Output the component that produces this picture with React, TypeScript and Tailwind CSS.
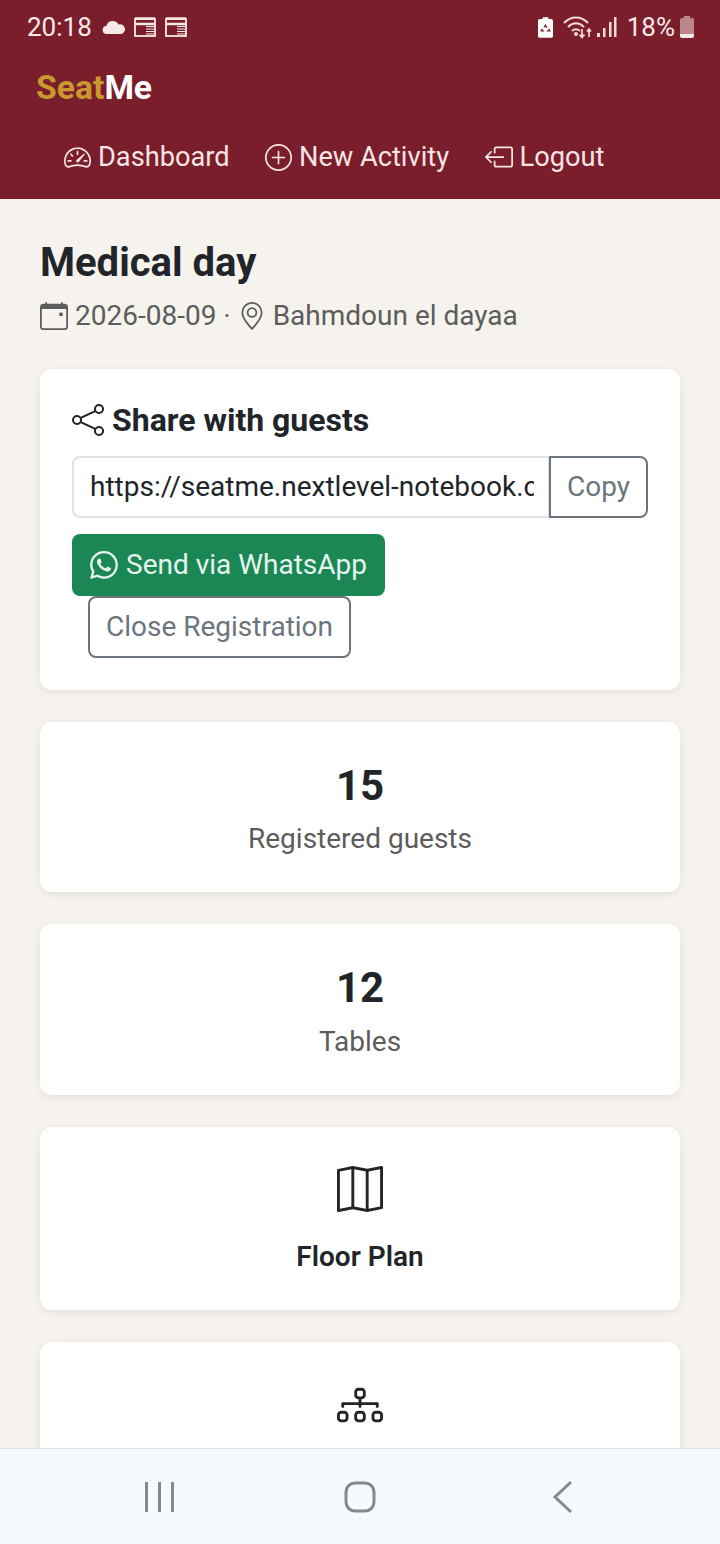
import React from "react";
import { BsSpeedometer2, BsPlusCircle, BsBoxArrowLeft, BsCalendarEvent, BsGeoAlt, BsShare, BsWhatsapp, BsMap, BsDiagram3 } from "react-icons/bs";

const NewsIcon = () => (
  <svg width="22" height="20" viewBox="0 0 22 20" fill="none" stroke="#f8e9e9">
    <rect x="1" y="2" width="20" height="17" strokeWidth="1.8" />
    <path d="M1 1.500h20M1 7h20" strokeWidth="2.400" />
    <path d="M12 9.500h8M12 12h8M12 14.500h8M12 17h8" strokeWidth="1.200" />
  </svg>
);

function StatusBar() {
  return (
    <div className="flex h-[54px] items-center justify-between pl-[27px] pr-[26px] text-[26px] text-[#f8e9e9]">
      <div className="flex items-center">
        <span>20:18</span>
        <svg className="ml-[10px]" width="24" height="16" viewBox="0 0 24 16" fill="#f8e9e9">
          <path d="M5 15a4 4 0 0 1-.6-8A6.500 6.500 0 0 1 16.500 5.500 4.800 4.800 0 0 1 19.500 15z" />
        </svg>
        <span className="ml-[8px] flex"><NewsIcon /></span>
        <span className="ml-[9px] flex"><NewsIcon /></span>
      </div>
      <div className="flex items-center">
        <svg width="15" height="21" viewBox="0 0 16 22">
          <path fill="#fff" d="M5 0h6v2h3a2 2 0 0 1 2 2v16a2 2 0 0 1-2 2H2a2 2 0 0 1-2-2V4a2 2 0 0 1 2-2h3z" />
          <path fill="none" stroke="#7b1e2c" strokeWidth="1.400" d="M6.500 11l1.500-2.500 1.500 2.500M11.500 12.500l1 2h-3M4.500 12.500l-1 2h3" />
        </svg>
        <svg className="ml-[10px]" width="30" height="24" viewBox="0 0 30 24" fill="none" stroke="#f3d9da" strokeWidth="2">
          <path d="M1 8c7-7.500 17-7.500 24 0M5 12c5-5 11-5 16 0M9 16c3-2.500 5-2.500 8 0" />
          <circle cx="13" cy="19" r="1" fill="#f3d9da" />
          <path d="M19 14v8M16.500 19.500l2.500 3 2.500-3M26 22v-8M24 16.500l2-2.500 2 2.500" strokeWidth="1.700" />
        </svg>
        <svg className="ml-[4px]" width="20" height="21" viewBox="0 0 20 21" fill="#f3d9da">
          <rect x="0" y="16" width="3" height="4" />
          <rect x="6" y="11" width="2.500" height="9" />
          <rect x="12" y="5" width="2.500" height="15" />
          <rect x="17" y="0" width="2.500" height="20" />
        </svg>
        <span className="ml-[10px]">18%</span>
        <svg className="ml-[5px]" width="14" height="22" viewBox="0 0 14 22">
          <path fill="#b9868c" d="M4 0h6v2h2a2 2 0 0 1 2 2v14H0V4a2 2 0 0 1 2-2h2z" />
          <path fill="#f8e9e9" d="M0 18h14v2a2 2 0 0 1-2 2H2a2 2 0 0 1-2-2z" />
        </svg>
      </div>
    </div>
  );
}

function NavItem({ icon, label }: { icon: React.ReactNode; label: string }) {
  return (
    <div className="flex items-center gap-[7px] text-[27.200px] leading-[40px] text-[#f8e5e6]">
      {icon}
      <span>{label}</span>
    </div>
  );
}

function StatCard({ value, label, h, gap }: { value: string; label: string; h: string; gap: string }) {
  return (
    <div className={`flex shrink-0 flex-col items-center rounded-xl bg-white pt-[40px] shadow-[0_2px_8px_rgba(0,0,0,0.08)] ${h}`}>
      <div className="text-[42px] font-bold leading-[48px] text-[#212529]">{value}</div>
      <div className={`${gap} text-[28px] leading-[40px] text-[#5c5c5c]`}>{label}</div>
    </div>
  );
}

export default function App() {
  return (
    <div className="flex h-[1544px] w-[720px] flex-col overflow-hidden bg-[#f6f3ee] font-['Roboto',sans-serif]">
      <header className="h-[199px] shrink-0 bg-[#7b1e2c]">
        <StatusBar />
        <div className="pl-[36px] pt-[13px] text-[33.700px] font-bold leading-[42px]">
          <span className="text-[#c9982f]">Seat</span>
          <span className="text-white">Me</span>
        </div>
        <nav className="flex items-center gap-[35.500px] pl-[64px] pt-[28px]">
          <NavItem icon={<BsSpeedometer2 size={27} />} label="Dashboard" />
          <NavItem icon={<BsPlusCircle size={27} />} label="New Activity" />
          <NavItem icon={<BsBoxArrowLeft size={28} />} label="Logout" />
        </nav>
      </header>

      <main className="flex min-h-0 flex-1 flex-col overflow-hidden px-[40px] pt-[39px]">
        <h1 className="text-[40px] font-bold leading-[50px] text-[#212529]">Medical day</h1>
        <div className="mt-[8px] flex items-center text-[28px] leading-[40px] text-[#5c5c5c]">
          <BsCalendarEvent size={28} />
          <span className="ml-[7px]">2026-08-09 ·</span>
          <BsGeoAlt size={28} className="ml-[7px]" />
          <span className="ml-[7px]">Bahmdoun el dayaa</span>
        </div>

        <section className="mt-[33px] h-[321px] shrink-0 rounded-xl bg-white px-[32px] pt-[31px] shadow-[0_2px_8px_rgba(0,0,0,0.08)]">
          <div className="flex items-center gap-[8px] text-[#212529]">
            <BsShare size={32} />
            <span className="text-[32px] font-bold leading-[40px]">Share with guests</span>
          </div>
          <div className="mt-[16px] flex h-[62px]">
            <div className="flex w-[478px] items-center overflow-hidden rounded-l-lg border-2 border-[#dee2e6] pl-[16px] pr-[14px] text-[28px] text-[#212529]">
              <span className="block overflow-hidden whitespace-nowrap">https://seatme.nextlevel-notebook.c</span>
            </div>
            <div className="-ml-[1px] flex w-[99px] items-center justify-center rounded-r-lg border-2 border-[#6c757d] text-[28px] text-[#6c757d]">Copy</div>
          </div>
          <div className="mt-[16px] flex h-[62px] w-[313px] items-center gap-[8px] rounded-lg bg-[#1b8755] pl-[18px] text-[28px] text-[#e6f5ee]">
            <BsWhatsapp size={28} />
            <span>Send via WhatsApp</span>
          </div>
          <div className="ml-[16px] flex h-[62px] w-[263px] items-center justify-center rounded-lg border-2 border-[#6c757d] text-[28px] text-[#6c757d]">Close Registration</div>
        </section>

        <div className="mt-[32px] flex flex-col gap-[32px]">
          <StatCard value="15" label="Registered guests" h="h-[170px]" gap="mt-[9px]" />
          <StatCard value="12" label="Tables" h="h-[171px]" gap="mt-[10px]" />
          <div className="flex h-[183px] shrink-0 flex-col items-center rounded-xl bg-white pt-[39px] text-[#212529] shadow-[0_2px_8px_rgba(0,0,0,0.08)]">
            <BsMap size={46} />
            <div className="mt-[25px] text-[28px] font-semibold leading-[40px]">Floor Plan</div>
          </div>
          <div className="flex h-[183px] shrink-0 flex-col items-center rounded-xl bg-white pt-[40px] text-[#212529] shadow-[0_2px_8px_rgba(0,0,0,0.08)]">
            <BsDiagram3 size={46} />
          </div>
        </div>
      </main>

      <footer className="flex h-[96px] shrink-0 items-center border-t border-[#e2e4e8] bg-[#f6f9fe] text-[#85888c]">
        <div className="flex w-[720px] items-center pl-[143px]">
          <svg width="32" height="32" viewBox="0 0 32 32" fill="currentColor">
            <rect x="2" y="1" width="3" height="30" />
            <rect x="15" y="1" width="3" height="30" />
            <rect x="28" y="1" width="3" height="30" />
          </svg>
          <svg className="ml-[169px]" width="32" height="32" viewBox="0 0 32 32" fill="none" stroke="currentColor" strokeWidth="3">
            <rect x="2" y="2" width="28" height="28" rx="9" />
          </svg>
          <svg className="ml-[176px]" width="22" height="34" viewBox="0 0 22 34" fill="none" stroke="currentColor" strokeWidth="3">
            <path d="M19 2 3 17l16 15" />
          </svg>
        </div>
      </footer>
    </div>
  );
}
